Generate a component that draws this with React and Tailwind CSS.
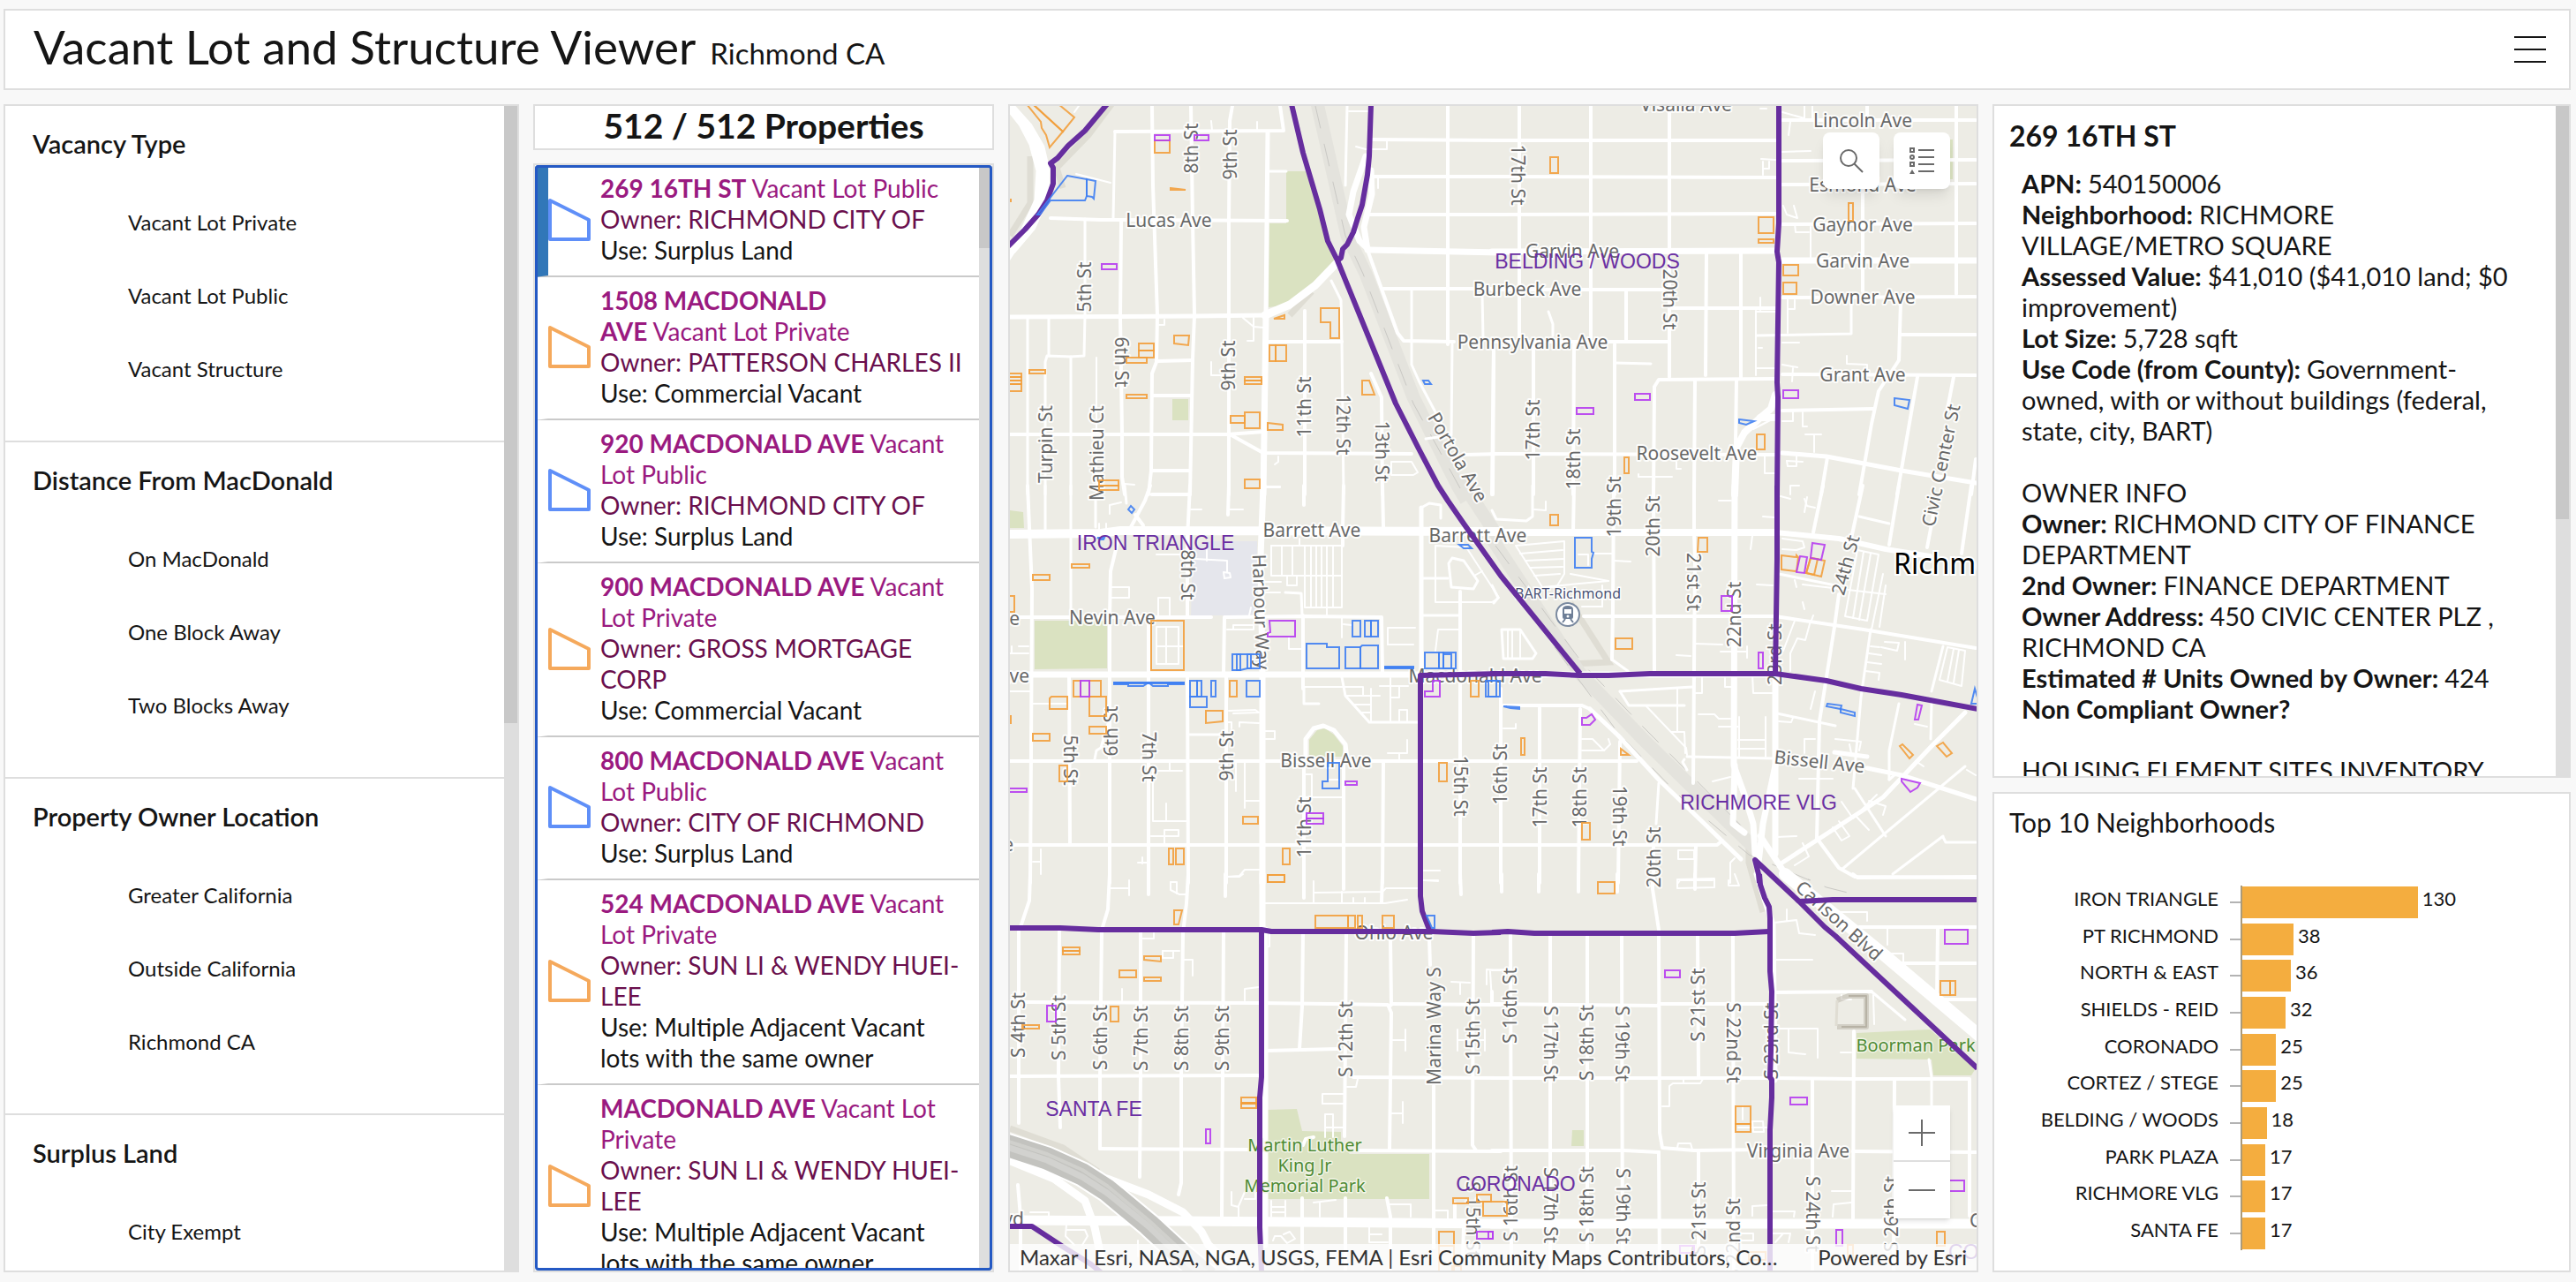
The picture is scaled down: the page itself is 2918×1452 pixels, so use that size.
import React from 'react';

const filters = [
  { title: 'Vacancy Type', options: ['Vacant Lot Private', 'Vacant Lot Public', 'Vacant Structure'] },
  { title: 'Distance From MacDonald', options: ['On MacDonald', 'One Block Away', 'Two Blocks Away'] },
  { title: 'Property Owner Location', options: ['Greater California', 'Outside California', 'Richmond CA'] },
  { title: 'Surplus Land', options: ['City Exempt'] },
];

const BLUE = '#5f8ff8';
const ORANGE = '#f5a95c';

const properties = [
  { name: '269 16TH ST', type: 'Vacant Lot Public', owner: 'RICHMOND CITY OF', use: 'Surplus Land', color: BLUE, selected: true },
  { name: '1508 MACDONALD\nAVE', type: 'Vacant Lot Private', owner: 'PATTERSON CHARLES II', use: 'Commercial Vacant', color: ORANGE },
  { name: '920 MACDONALD AVE', type: 'Vacant\nLot Public', owner: 'RICHMOND CITY OF', use: 'Surplus Land', color: BLUE },
  { name: '900 MACDONALD AVE', type: 'Vacant\nLot Private', owner: 'GROSS MORTGAGE\nCORP', use: 'Commercial Vacant', color: ORANGE },
  { name: '800 MACDONALD AVE', type: 'Vacant\nLot Public', owner: 'CITY OF RICHMOND', use: 'Surplus Land', color: BLUE },
  { name: '524 MACDONALD AVE', type: 'Vacant\nLot Private', owner: 'SUN LI & WENDY HUEI-\nLEE', use: 'Multiple Adjacent Vacant\nlots with the same owner', color: ORANGE },
  { name: 'MACDONALD AVE', type: 'Vacant Lot\nPrivate', owner: 'SUN LI & WENDY HUEI-\nLEE', use: 'Multiple Adjacent Vacant\nlots with the same owner', color: ORANGE },
];

const details = [
  ['APN:', '540150006'],
  ['Neighborhood:', 'RICHMORE\nVILLAGE/METRO SQUARE'],
  ['Assessed Value:', '$41,010 ($41,010 land; $0\nimprovement)'],
  ['Lot Size:', '5,728 sqft'],
  ['Use Code (from County):', 'Government-\nowned, with or without buildings (federal,\nstate, city, BART)'],
  null,
  ['', 'OWNER INFO'],
  ['Owner:', 'RICHMOND CITY OF FINANCE\nDEPARTMENT'],
  ['2nd Owner:', 'FINANCE DEPARTMENT'],
  ['Owner Address:', '450 CIVIC CENTER PLZ ,\nRICHMOND CA'],
  ['Estimated # Units Owned by Owner:', '424'],
  ['Non Compliant Owner?', ''],
  null,
  ['', 'HOUSING ELEMENT SITES INVENTORY'],
];

const neighborhoods = [
  ['IRON TRIANGLE', 130], ['PT RICHMOND', 38], ['NORTH & EAST', 36], ['SHIELDS - REID', 32], ['CORONADO', 25],
  ['CORTEZ / STEGE', 25], ['BELDING / WOODS', 18], ['PARK PLAZA', 17], ['RICHMORE VLG', 17], ['SANTA FE', 17],
];

/* ---------- map data: six survey sheets, each with its own origin ---------- */
const SX = 2.8;
const SY = 3;
const sheets = {
  A: {
    o: [1140, 110],
    parks: ['888,252 950,252 1050,560 980,640 900,705 832,715 835,430 888,430', '525,1027 577,1027 577,1097 525,1097'],
    roads: {
      2: ['285,885 285,1350', '222,260 330,290', '750,750 785,780 815,782', '785,750 783,828 765,828', '650,900 650,945 690,945', '502,755 502,775 485,775', '375,1315 405,1317', '862,1220 862,1238 850,1248', '1220,1238 1285,1240 1305,1275 1290,1285 1222,1285 1220,1238', '650,80 652,115', '796,85 796,115', '1110,168 1140,177 1208,177 1208,150', '1180,270 1180,310', '215,50 230,30', '1085,48 1150,48', '822,1322 868,1322'],
      3: ['345,118 338,410', '249,415 248,740 246,878 205,882 204,1350', '205,882 130,880 122,900 122,1350', '66,750 66,1350', '134,750 134,880', '835,252 888,252', '1030,625 1060,690 1065,830 1070,1350', '1080,30 1075,300', '1510,670 1512,820', '1415,840 1412,1150 1330,1160', '1286,655 1284,910 1310,970 1380,1110'],
      4: ['462,30 465,300 480,740 475,900 462,940 460,1270 450,1350', '586,30 590,420 595,740 590,890 583,1350', '718,30 708,80 706,420 706,1350', '365,420 362,750 368,1140 368,1290 375,1350', '345,118 880,115 868,30', '140,410 300,416 890,420', '480,897 590,893', '462,1014 585,1014', '11,1147 700,1145 815,1137', '715,1150 815,1210 1285,1212', '462,1270 583,1270', '462,1350 583,1350', '835,832 1065,830', '945,725 945,1350', '1155,940 1190,1020 1192,1350', '1155,145 1568,147', '1150,270 1568,270', '1150,400 1568,399', '1400,30 1400,840', '1145,520 1240,800 1260,828 1420,832', '1195,650 1568,652', '1545,850 1540,1350', '1450,1215 1568,1212'],
      5: ['11,747 600,744 820,742', '828,120 822,740'],
      7: ['822,740 815,1350', '1150,520 1568,528', '1140,200 1100,320 1085,400 1120,490 1150,520', '1155,250 1160,330 1135,440 1145,520'],
      9: ['820,742 900,705 980,640 1050,560', '0,20 50,90 85,160 105,250 100,350 60,450 0,550', '20,40 70,100 110,170 125,250 122,340 80,440 20,520'],
    },
    o_: [[471, 148, 519, 189], [382, 885, 446, 904], [420, 836, 468, 860], [420, 860, 468, 885], [382, 1010, 446, 1024], [74, 926, 122, 940], [5, 938, 48, 950], [5, 950, 48, 962], [5, 962, 48, 975], [5, 975, 48, 1000], '533,811 580,811 578,844 533,838', [757, 950, 810, 962], [757, 962, 810, 975], [712, 1082, 757, 1108], [757, 1070, 804, 1126], '830,1106 877,1112 877,1132 830,1132', [835, 842, 853, 898], [853, 842, 887, 898], '848,753 882,740 882,753', '998,716 1055,716 1055,819 1027,819 1027,766 998,766', '1127,962 1150,962 1167,1012 1127,1012', [757, 1298, 804, 1330], [293, 1303, 356, 1320], [293, 1320, 356, 1336], '522,308 569,315 522,315', '65,25 108,85 112,105 125,130 137,172 180,117 85,25', '180,117 215,70 165,25 85,25', [5, 348, 15, 354]],
    p_: [[471, 128, 519, 148], [595, 128, 642, 148], [303, 566, 351, 585]],
    b_: ['192,266 254,278 254,335 248,351 140,351 107,400 97,400', '254,278 284,285 276,346 272,338 254,335', '1322,962 1338,962 1347,976 1328,976'],
  },
  B: {
    o: [1690, 110],
    parks: ['1440,145 1461,145 1461,280 1440,280'],
    roads: {
      2: ['838,725 838,945', '838,728 900,728', '840,922 900,922', '990,30 990,72 920,50', '1015,30 1015,78', '920,185 1010,183', '1010,440 1010,545', '920,1100 955,1100 955,1070', '985,1070 985,1120 1000,1120', '995,1147 1045,1147', '1022,1150 1022,1205', '937,680 937,800', '960,690 960,720 940,720', '1125,880 1125,905 1190,910 1190,935', '465,1280 465,1290 570,1290', '865,1215 865,1278 900,1278', '855,210 900,212', '860,220 860,265', '880,220 880,242 862,242', '852,680 852,722', '945,85 942,130', '925,370 935,400 970,410 958,368', '960,430 962,458 1005,458', '920,835 975,835', '920,910 968,918', '955,920 953,965', '945,1350 945,1320 975,1320', '935,1235 985,1240', '965,1215 965,1255 938,1255 936,1235', '585,1240 585,1262 600,1262', '850,40 870,40', '845,852 858,852', '830,1128 900,1090'],
      3: ['180,730 193,770 193,810', '390,903 505,907', '840,810 1140,803 1140,700'],
      4: ['86,30 88,820', '313,30 313,820', '562,30 562,950', '0,147 900,147', '0,270 900,273', '0,399 900,397', '0,655 545,655', '570,717 900,717', '680,530 677,945', '790,530 790,950', '425,660 425,830', '0,832 560,832', '5,850 2,1350', '131,850 131,1350', '260,840 258,1350', '390,840 390,1350', '900,957 530,960 515,985 512,1350', '645,960 642,1350', '775,960 772,1180', '0,1212 900,1215', '920,78 1535,78', '920,215 1535,212', '920,297 1535,295', '920,432 1535,430', '920,680 1535,678', '920,942 1535,944', '920,1065 1210,1058', '1190,30 1190,80', '1175,295 1177,660', '1472,30 1472,670', '1295,700 1292,895 1225,1000 1205,1110 1165,1350', '1300,808 1535,806', '1350,950 1285,1350', '1465,950 1445,1060', '1065,1225 1045,1350', '1535,1230 1520,1350'],
      5: ['920,1210 1060,1220 1300,1270 1535,1310'],
      7: ['0,525 900,523', '920,555 1535,555'],
      8: ['900,1010 885,1060 850,1090 800,1140 775,1190 770,1350', '850,1090 900,1090'],
    },
    o_: [[185, 205, 211, 257], [846, 409, 894, 461], [846, 482, 894, 496], [924, 571, 972, 605], [924, 631, 967, 670], [1131, 361, 1146, 419], [840, 1147, 866, 1198], [421, 1225, 435, 1277]],
    p_: [[454, 1009, 502, 1030], [269, 1057, 323, 1078], [924, 997, 972, 1024]],
    b_: ['1278,1022 1325,1028 1320,1060 1278,1048', '784,1095 832,1101 805,1114 784,1108'],
  },
  C: {
    o: [1140, 550],
    parks: ['90,460 320,460 320,622 90,625', '11,85 52,90 56,145 11,145', '960,920 960,865 985,832 1010,825 1040,845 1068,885 1068,920'],
    roads: {
      2: ['840,205 1065,205 1065,413 945,413 945,205', '840,205 840,305 1065,305', '873,205 873,305', '890,305 890,340 920,340 920,305', '908,205 908,305', '965,205 965,413', '983,205 983,413', '1000,205 1000,413', '1017,205 1017,440', '1035,205 1035,413', '930,180 930,205', '820,327 870,327', '820,362 868,362', '475,480 545,480 545,605 475,605 475,480', '508,480 508,605', '475,545 560,545', '330,345 388,345 388,380 330,380', '482,447 482,380 518,380 518,447', '475,235 560,235', '600,250 700,255 700,295', '635,220 635,255', '690,295 708,298 710,312 692,314 690,295', '1360,205 1360,395 1540,395 1562,380 1460,210 1360,205', '1485,305 1510,290', '1360,560 1370,490 1440,490', '1210,540 1210,483 1295,483', '1210,540 1290,540', '943,685 1130,685 1130,712', '1075,715 1185,715', '1100,745 1155,745', '1125,770 1155,770', '1155,690 1155,800', '1218,655 1218,805', '1185,680 1275,680', '1245,805 1245,762 1270,762 1270,800', '1218,720 1245,720 1245,680', '85,740 190,740', '11,700 80,700', '705,765 790,762 800,770 720,775', '740,820 740,805 800,808', '700,805 715,805 715,825', '465,960 465,1140 570,1140', '460,1190 545,1190 545,1170 500,1170 500,1215', '508,1140 508,1080', '480,968 558,968', '518,940 518,968', '755,940 755,1095', '755,1070 805,1072', '727,940 727,1038', '700,1330 740,1325 755,1305 805,1305', '950,980 970,980 970,1058', '950,1058 1065,1058', '85,1278 108,1278', '108,1235 108,1320', '418,1280 445,1280', '430,1262 430,1285', '820,835 850,835 850,860 820,860', '1210,910 1270,908 1270,865', '1245,910 1245,930', '700,490 785,490 785,475 720,475 720,490', '770,440 775,415', '11,570 70,570', '18,545 18,570', '38,545 70,545', '1065,450 1065,515', '895,515 895,555 935,555', '1325,1308 1375,1308', '1325,1340 1370,1342', '328,95 328,65 365,58', '293,128 293,150', '316,128 316,150', '585,80 618,80', '705,80 750,80', '1095,475 1070,470', '1025,1000 1055,1000', '820,5 868,5', '1440,490 1440,360'],
      3: ['122,0 122,150', '204,0 205,450', '283,50 283,140', '375,0 380,60', '460,30 580,30', '943,685 943,740 990,740', '885,362 935,365 938,440', '1065,650 1075,715 1150,805 1310,805', '1315,75 1340,60 1378,65 1378,110', '580,845 690,845', '280,930 285,900 300,890 328,790', '1320,315 1400,315', '1415,245 1450,255 1495,325 1480,350 1410,345 1402,265 1415,245', '1320,442 1440,440'],
      4: ['66,0 80,350 78,900 76,1350', '455,0 440,50 395,140', '410,100 435,135', '355,180 330,290 328,450 328,1350', '582,0 575,180', '573,180 575,440', '575,640 576,1350', '706,0 702,100', '943,0 943,65', '1070,0 1068,150', '1068,180 1068,205', '1192,0 1195,140', '11,447 650,447', '690,640 692,447 940,445 1190,447 1192,640', '11,935 1568,935', '11,1222 1568,1220', '200,640 202,1222', '452,450 452,1350', '697,640 698,1350', '940,440 942,690', '943,935 943,1350', '1070,935 1070,1350', '1195,935 1192,1350', '1440,360 1440,1350'],
      5: ['1315,75 1315,640', '948,930 950,860 975,825 1005,815 1040,830 1075,880 1080,930'],
      7: ['815,0 805,240 812,640 812,1350', '11,643 1568,643'],
      10: ['11,165 300,162 360,154 1568,156'],
    },
    o_: [[460, 458, 564, 628], [208, 266, 262, 280], [85, 302, 138, 322], [5, 374, 26, 430], [214, 662, 236, 718], [262, 662, 300, 718], '136,722 142,716 193,716 193,760 136,760', [264, 716, 317, 783], [264, 818, 317, 843], [85, 842, 138, 867], [169, 950, 194, 1005], [707, 662, 732, 718], '634,764 687,764 687,800 634,806', [751, 1124, 799, 1150], [516, 1232, 530, 1288], '538,1232 564,1232 564,1288 538,1288', [875, 1232, 900, 1288], [830, 1322, 883, 1348], [1373, 943, 1397, 1005], [1474, 662, 1499, 718], [5, 783, 15, 806]],
    p_: [[236, 662, 262, 718], '835,458 916,458 916,514 830,514 830,502 836,498', [5, 1028, 65, 1042], [1076, 1004, 1112, 1018], [953, 1112, 1006, 1132], [953, 1132, 1006, 1150], '1352,662 1376,662 1376,718 1328,718 1328,700 1352,700'],
    b_: [[1098, 458, 1124, 514], [1137, 458, 1155, 514], [1155, 458, 1180, 514], '953,537 1017,537 1017,548 1055,548 1055,622 953,622', [1076, 548, 1122, 622], '1122,548 1128,543 1180,543 1180,622 1122,622', [1200, 614, 1292, 617], [1200, 617, 1292, 622], '718,572 804,572 804,622 765,622 742,628 718,628', [730, 572, 742, 626], [765, 572, 775, 622], [583, 662, 606, 717], [606, 662, 620, 717], [583, 717, 636, 753], [650, 662, 663, 717], [762, 662, 804, 717], '342,668 564,668 564,675 512,675 512,681 465,681 450,668 435,681 387,681 387,675 342,675', [342, 668, 564, 672], '1020,943 1055,943 1055,1029 1003,1029 1003,1004 1020,1004', [1328, 566, 1373, 622], [1373, 566, 1385, 622], [1385, 566, 1425, 622], [1387, 572, 1410, 622], [1530, 662, 1566, 717], '386,80 396,68 407,82 398,94', '1435,200 1465,200 1475,213 1450,213', '288,176 312,176 308,184 300,182'],
  },
  D: {
    o: [1690, 550],
    parks: [],
    roads: {
      2: ['75,205 230,190 230,300 205,345 160,345 75,205', '90,230 225,220', '105,255 228,248', '120,280 225,275', '135,305 215,300', '383,232 320,232', '275,235 305,235 305,270', '50,490 50,588', '65,490 65,588', '90,490 90,588', '160,345 370,325', '250,300 370,325', '350,410 350,340', '285,410 350,410', '385,255 440,258', '170,55 170,85 135,80', '588,690 588,835', '490,750 615,890 620,915', '568,838 610,838 612,910', '655,778 705,778 720,793 755,793', '780,865 865,865', '780,893 865,893', '867,785 867,920', '785,785 785,920', '645,538 730,540', '725,563 810,563', '810,545 810,585', '825,170 820,215', '860,105 895,108', '720,50 760,50', '1160,220 1225,235 1190,460 1120,445 1160,220', '1180,225 1145,450', '1200,230 1165,455', '1240,300 1205,490', '1250,340 1230,480', '1420,660 1445,550 1500,560 1490,680 1420,660', '1465,555 1445,665', '1480,558 1465,670', '1025,700 1010,760', '960,460 925,560', '1010,460 995,525 970,520 945,570 945,630', '35,825 75,825 75,810', '285,900 355,900 375,880 370,860', '285,860 320,862 355,900', '720,820 785,820', '990,45 1000,70 1025,75', '990,90 1000,40', '915,35 945,45', '920,180 985,190 990,210 965,220 920,215', '910,800 950,805 955,790', '1090,860 1170,870 1165,900', '990,910 990,860 1025,860', '975,995 1080,995', '1140,910 1135,880', '1080,1160 1110,1205 1135,1190 1100,1140', '1110,1075 1145,1130 1220,1050', '1150,1120 1195,1170', '1195,1070 1250,1090 1240,1120', '960,1290 1005,1260 985,1215', '905,1195 965,1190', '755,1350 755,1280 770,1265', '590,1240 640,1240 640,1270 590,1270 590,1240', '590,1350 595,1340 700,1340', '1505,965 1535,985', '1310,530 1310,590', '1245,530 1290,535 1285,560 1235,550', '1200,545 1230,550', '1195,570 1235,575', '1190,600 1235,605', '1185,630 1230,635 1225,660', '1345,935 1370,955', '1340,810 1380,820', '1020,440 1010,465', '700,1005 755,990', '960,320 965,345', '985,395 990,420', '740,655 740,685 760,685', '665,640 665,705 645,705', '825,640 828,705 895,705', '840,335 890,340', '585,575 630,578', '985,335 1250,370'],
      3: ['0,85 15,115 110,120 128,105 130,0', '30,490 90,490 140,570 130,588 35,588 30,490', '380,590 430,630', '405,700 435,748 610,748', '405,700 635,685', '620,920 900,928', '610,930 605,940 620,965', '910,300 1090,340', '1430,545 1395,700', '1395,740 1392,860', '905,775 1090,815', '1165,105 1260,130', '1110,1305 1500,955', '1270,1320 1430,1190', '1150,1030 1250,1190', '1430,1195 1440,1212 1535,1212', '1290,740 1260,900 1260,1000', '530,1010 520,1150', '1200,490 1170,720 1145,1030', '1280,980 1260,1000', '0,340 20,380 5,400'],
      4: ['260,0 258,158', '385,0 383,420 380,590', '512,0 514,638', '640,0 640,160 645,250 638,1010', '290,443 895,443', '900,443 1180,490 1535,552', '28,690 28,1350', '35,748 285,748 310,760', '152,755 150,1350', '280,760 275,1350', '405,870 400,1350', '0,935 460,935', '0,1220 715,1220 730,1205', '648,1225 645,1350', '1050,0 1020,160', '1175,0 1140,180', '1290,0 1260,200', '1400,100 1380,210', '1520,0 1490,230', '1100,370 1085,480 1040,800 1030,1200', '1035,1205 1100,1300 1150,1330 1535,1332', '512,1220 512,1350'],
      5: ['920,1280 1240,1060 1400,880 1500,770', '1190,960 1300,985 1535,1065', '310,760 400,850 530,1000 790,1270', '1085,905 1190,920'],
      7: ['770,0 768,950 800,1050 830,1150 835,1250', '770,950 765,1150 800,1180', '900,640 900,950 860,1150 845,1280', '900,950 900,1250', '850,1190 950,1350', '0,641 900,641'],
      8: ['0,158 900,158'],
      6: ['900,158 1100,180 1250,215 1390,240'],
    },
    o_: [[185, 98, 211, 136], '656,176 682,176 682,226 651,226', '918,236 965,242 967,238 972,242 965,292 918,285', '1010,246 1055,255 1045,309 998,298', '1010,246 1033,250 1022,303 998,298', [393, 518, 446, 556], [91, 859, 104, 916], '410,895 434,916 410,916', [286, 1147, 312, 1204], '1293,885 1302,878 1336,915 1325,928', '1412,885 1430,872 1460,908 1442,922'],
    p_: ['1017,195 1055,200 1045,253 1010,246', '977,241 1000,243 990,298 965,293', [729, 374, 761, 425], [846, 566, 859, 622], '286,790 300,790 315,777 328,795 312,814 286,814', '1350,745 1363,747 1352,796 1340,796', '1300,997 1358,1010 1350,1025 1328,1042 1300,1004'],
    b_: ['264,176 317,176 317,225 322,228 317,250 317,280 264,280', '1065,740 1110,746 1106,760 1060,750', '1106,760 1152,770 1152,783 1106,770', '35,751 88,753 88,760 60,755', [-20, 662, 15, 717], '1532,690 1520,740 1545,742'],
  },
  E: {
    o: [1140, 990],
    parks: ['828,800 922,798 937,872 1060,877 1060,920 1090,950 1342,952 1342,1103 828,1105'],
    roads: {
      2: ['975,62 1192,60 1205,48 1310,48', '975,25 975,98', '820,100 1200,98 1270,88', '1065,60 1065,98', '1100,80 1100,98', '1138,82 1138,98', '1002,780 1002,747 1070,747', '1002,780 1070,780', '1010,895 1012,815 1037,815 1037,895', '1222,563 1265,563', '1265,528 1265,600', '1222,812 1258,812', '1258,775 1258,845', '1432,528 1432,600', '1432,565 1518,565', '1518,528 1518,600', '330,48 390,48', '390,20 390,72', '522,28 540,28 540,65', '522,28 522,55 550,68 572,68', '425,220 468,220 468,200', '495,262 550,262', '495,262 495,285 530,285 530,262', '560,290 592,290 592,345', '368,390 368,430', '755,430 755,390 800,385', '835,205 835,245 820,245', '1410,367 1470,370', '1438,370 1438,408', '1325,22 1370,25', '1522,375 1522,325 1568,328', '1535,330 1540,435', '700,10 740,10 750,0', '1080,722 1110,722 1115,695', '715,1080 715,1125 735,1130', '755,1080 735,1128 735,1165', '790,1070 790,1105 755,1105', '840,1130 885,1130', '840,1150 885,1150', '885,1110 885,1165', '840,1110 840,1165', '975,1115 1045,1107', '995,1115 995,1165', '1215,1122 1282,1122 1282,1165', '1360,1142 1400,1142 1400,1170', '75,1150 135,1150 135,1165', '190,1190 188,1230 215,1260', '190,1210 250,1210 258,1230 240,1260', '845,1245 850,1230 870,1230 890,1255 915,1240 900,1215 880,1225', '1150,1200 1150,1250 1210,1250', '1150,1225 1190,1225', '418,1245 418,1300', '1012,860 1070,860'],
      4: ['76,0 72,90 45,180', '328,0 322,120 305,180', '577,0 572,100 560,200 553,690 553,1050 545,1090', '452,0 452,70', '695,0 695,75', '943,0 943,80', '1070,0 1070,50', '1192,0 1190,95', '1440,0 1442,70', '38,195 38,845', '167,195 165,690 170,860', '303,195 296,690 296,932', '425,195 425,690 422,1030', '688,195 685,690 683,1165', '940,200 938,450 930,595', '1078,200 1073,890', '1218,220 1222,445 1212,450 1220,470 1215,940', '1340,220 1345,310', '1355,720 1355,1270', '1480,200 1478,920 1490,940', '60,435 800,437 1210,445', '1220,442 1568,445', '11,687 800,685', '1100,690 1568,692', '296,932 780,936', '1090,940 1568,942', '822,600 1050,595', '938,1100 938,1350', '1075,1100 1075,1350', '1208,1100 1217,1165 1217,1350', '37,1055 45,1165', '45,1190 45,1350', '1423,1120 1423,1170', '1450,1200 1448,1300', '940,920 950,900 975,895'],
      7: ['812,0 812,180', '820,190 820,1260'],
      9: ['0,970 150,1035 250,1110 280,1200 300,1300', '320,1035 450,1090 560,1150 620,1215 640,1260 720,1340'],
      11: ['11,1175 560,1180 1568,1187'],
    },
    o_: [[830, 2, 883, 28], '533,122 556,122 545,172 533,172', [981, 140, 1083, 184], [1083, 140, 1106, 184], [1115, 140, 1129, 184], [1194, 140, 1230, 184], [180, 248, 233, 260], [180, 260, 233, 273], [359, 326, 412, 352], '438,278 491,278 491,297 438,292', [438, 350, 491, 364], [331, 451, 356, 502], [51, 512, 104, 526], [746, 758, 793, 776], [746, 776, 793, 780], [746, 780, 793, 796], [1418, 1100, 1465, 1120], [1491, 1088, 1538, 1112], [1373, 1214, 1420, 1262], [1373, 1262, 1420, 1350], [1415, 1332, 1443, 1350]],
    p_: [[130, 446, 156, 502], [633, 866, 648, 916], [1491, 1214, 1544, 1240]],
    b_: ['1332,140 1358,140 1358,184 1350,184'],
  },
  F: {
    o: [1690, 990],
    parks: ['1157,540 1390,528 1535,660 1520,683 1400,683 1395,630 1157,628', '255,870 290,870 290,925 252,925'],
    roads: {
      2: ['588,18 705,15 705,45 588,48 588,18', '750,20 750,38 785,38 770,0', '895,165 965,155 975,200 1025,207', '935,120 935,160', '895,290 1015,292', '910,525 1033,525 1033,625', '940,525 940,605 995,612', '1090,130 1190,130 1190,160', '1253,185 1253,240', '1258,270 1305,270 1305,298', '540,790 562,790 562,720 575,710 660,710 668,695', '608,695 608,710', '588,930 590,915 630,915 635,935', '825,840 860,840 862,875 830,875 825,840', '795,835 795,790', '780,860 870,860', '1080,1165 1083,1122 1140,1115', '1078,1077 1140,1077', '825,1160 825,1127 875,1125', '885,1147 960,1147 958,1165', '780,1220 830,1220 830,1245 780,1245', '890,1220 945,1220 940,1250', '900,1250 925,1220', '0,327 45,325', '1110,410 1110,425 1140,425', '1105,605 1140,605', '1210,410 1212,510'],
      3: ['1205,400 1310,495', '1385,630 1395,690 1395,800'],
      4: ['30,0 30,60', '148,0 148,60', '273,0 273,60', '398,0 398,60', '645,0 645,50', '510,0 510,50 528,190', '59,205 62,1350', '185,210 186,1350', '302,210 302,1350', '411,210 415,1350', '530,210 532,880 540,930 640,940 870,935', '530,945 532,1350', '652,210 655,690', '765,210 767,1350', '655,945 655,1350', '0,442 530,448', '530,440 870,440', '0,692 870,692 1145,697 1515,695 1515,1160', '0,940 420,938 530,945', '895,403 1205,400', '1147,535 1145,1170', '1017,700 1017,1350', '1277,700 1275,1350', '1145,942 1535,944', '1165,180 1535,180', '1413,185 1410,420', '1280,303 1535,303', '1410,425 1535,425', '1145,0 1160,12 1535,10', '0,400 0,440'],
      7: ['840,0 890,170 895,700'],
      11: ['0,1187 1535,1187'],
      14: ['930,0 1250,280 1560,560'],
    },
    o_: [[336, 26, 390, 65], [774, 788, 821, 848], [774, 848, 821, 875], [1423, 362, 1453, 412], [1453, 362, 1471, 412], [1412, 1214, 1437, 1262], [1128, 1260, 1144, 1310], [815, 1285, 868, 1310], [-28, 1112, 48, 1162]],
    p_: [[549, 326, 597, 352], [946, 758, 1000, 784], [1435, 188, 1510, 238], [1440, 1040, 1499, 1078], [1093, 1208, 1112, 1262], [595, 1262, 640, 1288], [-10, 1214, 4, 1240]],
    b_: [],
  },
};

const boundaries = [
  ['A', '318,25 250,115 195,165 162,208 140,224 148,240 148,295 130,350 100,400 60,450 5,508'],
  ['A', '905,25 940,190 995,380 1020,490 1050,555 1235,1040 1310,1200 1370,1320 1400,1370 1450,1450 1568,1625 1820,1958'],
  ['A', '1157,25 1150,200 1145,265 1128,365 1115,410 1100,460 1080,500 1068,515 1060,545 1050,555'],
  ['B', '909,25 909,430 903,525 909,560 903,970 908,1020 905,1350'],
  ['C', '1568,638 1312,645 1312,1350'],
  ['D', '905,0 905,250 900,640'],
  ['D', '-5,638 170,638 280,645 370,645 500,638 900,638 1060,662 1170,690 1300,712 1420,735 1540,760'],
  ['D', '848,1350 846,1320 835,1272 975,1412 1055,1500 1090,1530 1540,1980'],
  ['E', '1312,0 1312,75 1320,125 1340,190'],
  ['E', '5,183 170,183 290,190 810,188 840,195 1350,195 1480,200 1568,197'],
  ['E', '809,190 809,690 803,760 803,1200 808,1350'],
  ['E', '5,1197 80,1197 180,1265 270,1325 300,1352'],
  ['F', '0,197 50,194 135,201 770,200 880,194'],
  ['F', '848,0 850,35 865,80 878,110 882,150 882,330 888,400 885,600 882,690 888,700 888,760 882,870 882,1352'],
  ['F', '975,92 1080,87 1540,87'],
];

const streets = [
  ['A', 'Lucas Ave', 515, 420, 0], ['A', '8th St', 588, 175, -90], ['A', '9th St', 712, 195, -90], ['A', '5th St', 248, 645, -90],
  ['A', '6th St', 365, 900, 90], ['A', '9th St', 706, 912, -90], ['A', 'Turpin St', 126, 1180, -90], ['A', 'Mathieu Ct', 288, 1210, -90],
  ['A', '11th St', 945, 1052, -90], ['A', '12th St', 1067, 1112, 90], ['A', '13th St', 1190, 1203, 90], ['A', 'Portola Ave', 1431, 1224, 60],
  ['B', 'Visalia Ave', 616, 26, 0], ['B', 'Lincoln Ave', 1176, 82, 0], ['B', 'Esmond Ave', 1176, 300, 0], ['B', 'Gaynor Ave', 1176, 435, 0],
  ['B', 'Garvin Ave', 1176, 557, 0], ['B', 'Downer Ave', 1176, 680, 0], ['B', 'Grant Ave', 1176, 946, 0], ['B', 'Garvin Ave', 255, 525, 0],
  ['B', 'Burbeck Ave', 112, 655, 0], ['B', 'Pennsylvania Ave', 129, 835, 0], ['B', '17th St', 80, 265, 90], ['B', '20th St', 562, 688, 90],
  ['B', '17th St', 132, 1130, -90], ['B', '18th St', 260, 1230, -90], ['B', '19th St', 388, 1392, -90], ['B', 'Roosevelt Ave', 650, 1213, 0],
  ['B', 'Civic Center St', 1425, 1251, -78],
  ['C', 'Barrett Ave', 968, 152, 0], ['C', 'Barrett Ave', 1495, 171, 0], ['C', '8th St', 573, 302, 90], ['C', 'Harbour Way', 805, 430, 88],
  ['C', 'Nevin Ave', 337, 450, 0], ['C', 'Macdonald Ave', 1487, 648, 0], ['C', '6th St', 332, 835, -90], ['C', '5th St', 202, 932, 90],
  ['C', '7th St', 452, 920, 90], ['C', '9th St', 700, 917, -90], ['C', 'Bissell Ave', 1014, 937, 0], ['C', '11th St', 945, 1162, -90],
  ['C', '15th St', 1440, 1020, 90],
  ['D', '16th St', 28, 980, -90], ['D', '20th St', 512, 138, -90], ['D', '21st St', 637, 327, 90], ['D', '22nd St', 770, 437, -90],
  ['D', '23rd St', 900, 573, -90], ['D', '24th St', 1122, 270, -75], ['D', '17th St', 153, 1058, -90], ['D', '18th St', 280, 1058, -90],
  ['D', '19th St', 402, 1122, 90], ['D', '20th St', 515, 1262, -90], ['D', 'Bissell Ave', 1040, 940, 6],
  ['E', 'Ohio Ave', 1228, 200, 0], ['E', 'S 4th St', 40, 512, -90], ['E', 'S 5th St', 168, 522, -90], ['E', 'S 6th St', 300, 555, -90],
  ['E', 'S 7th St', 427, 558, -90], ['E', 'S 8th St', 556, 558, -90], ['E', 'S 9th St', 687, 558, -90], ['E', 'S 12th St', 1078, 562, -90],
  ['E', 'Marina Way S', 1357, 515, -90], ['E', 'S 15th St', 1480, 553, -90], ['E', 'S 15th St', 1478, 1172, 90],
  ['F', 'S 16th St', 58, 447, -90], ['F', 'S 17th St', 185, 575, 90], ['F', 'S 18th St', 303, 572, -90], ['F', 'S 19th St', 412, 575, 90],
  ['F', 'S 21st St', 656, 443, -90], ['F', 'S 22nd St', 765, 572, 90], ['F', 'S 23rd St', 887, 567, -90], ['F', 'Virginia Ave', 972, 942, 0],
  ['F', 'Carlson Blvd', 1100, 160, 42], ['F', 'S 16th St', 62, 1120, -90], ['F', 'S 17th St', 185, 1125, 90], ['F', 'S 18th St', 303, 1122, -90],
  ['F', 'S 19th St', 413, 1127, 90], ['F', 'S 21st St', 657, 1170, -90], ['F', 'S 22nd St', 767, 1240, -90], ['F', 'S 24th St', 1017, 1155, 90],
  ['F', 'S 26th St', 1268, 1155, -90],
];

const districts = [
  ['B', 'BELDING / WOODS', 303, 559], ['C', 'IRON TRIANGLE', 473, 195], ['D', 'RICHMORE VLG', 846, 1077],
  ['E', 'SANTA FE', 277, 799], ['F', 'CORONADO', 76, 1052],
];

const at = (s, x, y) => [Math.round(sheets[s].o[0] + x / SX), Math.round(sheets[s].o[1] + y / SY)];
const pts = (s, str) =>
  str.split(' ').map((p) => { const [x, y] = p.split(',').map(Number); return at(s, x, y).join(','); }).join(' ');
const shape = (s, v) =>
  typeof v === 'string' ? pts(s, v) : pts(s, `${v[0]},${v[1]} ${v[2]},${v[1]} ${v[2]},${v[3]} ${v[0]},${v[3]}`);

const names = Object.keys(sheets);

function Label({ s, text, x, y, r }) {
  const [cx, cy] = at(s, x, y);
  return (
    <text x={cx} y={cy} dy="7" transform={`rotate(${r} ${cx} ${cy})`} textAnchor="middle">{text}</text>
  );
}

function CityMap() {
  return (
    <svg className="block h-full w-full" viewBox="1144 120 1095 1319" preserveAspectRatio="xMidYMid slice" role="img" aria-label="Map of Richmond">
      <rect x="1000" y="0" width="1400" height="1600" fill="#edece5" />
      <polygon points={pts('C', '590,215 630,190 795,188 795,440 700,442 585,442')} fill="#e5e6ec" />
      <g fill="#dae2c1">
        {names.map((n) => sheets[n].parks.map((p, i) => <polygon key={n + i} points={pts(n, p)} />))}
      </g>
      <g fill="none" stroke="#d6d3c8" strokeOpacity="0.6" strokeWidth="7">
        <polyline points={pts('A', '335,20 260,130 160,240 180,310')} />
        <polyline points={pts('A', '75,200 75,360 11,470')} />
        <polyline points={pts('A', '970,660 900,740')} />
        <polyline points={pts('D', '250,400 370,600 250,605')} />
        <polyline points={pts('D', '815,1200 815,1280 860,1450')} />
        <polyline points={pts('E', '11,865 180,930 290,1010')} />
      </g>
      <g fill="none" stroke="#e4e3dd" strokeWidth="15">
        <polyline points={pts('A', '985,20 1080,470 1140,600 1290,1020 1430,1320 1460,1370')} />
        <polyline points={pts('C', '1440,-20 1568,190')} />
        <polyline points={pts('D', '0,180 280,640 480,860 840,1240')} />
      </g>
      <g fill="none" stroke="#c9c8c4" strokeWidth="1" strokeDasharray="26 18">
        <polyline points={pts('A', '980,30 1075,470 1130,600 1290,1040 1440,1330')} />
        <polyline points={pts('D', '10,205 290,610 480,820 860,1230')} />
        <polyline points={pts('D', '200,550 400,840 600,1060 815,1255 1010,1340')} />
        <polyline points={pts('F', '940,-10 1060,45 1150,70')} />
      </g>
      <g fill="none" stroke="#ffffff" strokeLinecap="round" strokeLinejoin="round">
        {names.map((n) =>
          Object.entries(sheets[n].roads).map(([w, list]) =>
            list.map((p, i) => <polyline key={n + w + i} points={pts(n, p)} strokeWidth={w} />)
          )
        )}
      </g>
      <g fill="none" strokeLinejoin="round">
        <polyline points={pts('E', '0,920 130,965 240,1020 320,1075 450,1190 560,1300 640,1370')} stroke="#ffffff" strokeWidth="29" />
        <polyline points={pts('E', '0,920 130,965 240,1020 320,1075 450,1190 560,1300 640,1370')} stroke="#c3c3bf" strokeWidth="25" />
        <polyline points={pts('E', '0,928 130,973 240,1028 320,1083 450,1198 560,1308 640,1378')} stroke="#d2d2cf" strokeWidth="7" />
        <polyline points={pts('E', '0,905 130,950 240,1005 320,1060 450,1175 560,1285 640,1355')} stroke="#d0d0cc" strokeWidth="4" />
        <polyline points={pts('F', '1095,430 1130,415 1188,415 1188,518 1095,520')} stroke="#b7b2a5" strokeOpacity="0.5" strokeWidth="6" />
        <polyline points={pts('F', '1130,415 1188,415 1188,518 1110,520')} stroke="#b7b2a5" strokeWidth="2" />
        <polyline points={pts('F', '1095,430 1092,515')} stroke="#e0ddd3" strokeWidth="3" />
      </g>

      <g fontFamily="'Noto Sans', sans-serif" fontSize="21" fill="#686868" stroke="#ffffff" strokeOpacity="0.85" strokeWidth="4" strokeLinejoin="round" paintOrder="stroke">
        {streets.map(([s, t, x, y, r], i) => <Label key={i} s={s} text={t} x={x} y={y} r={r} />)}
        <text x="1155" y="708" textAnchor="end">Nevin Ave</text>
        <text x="1166" y="773" textAnchor="end">Macdonald Ave</text>
        <text x="1148" y="964" textAnchor="end">Chanslor Ave</text>
        <text x="1160" y="1388" textAnchor="end">Cutting Blvd</text>
        <text x="2231" y="1390">Cutting Blvd</text>
      </g>
      <g fontFamily="'Noto Sans', sans-serif" fontSize="20" fill="#4e8a34" stroke="#f1f4e6" strokeWidth="3" strokeLinejoin="round" paintOrder="stroke" textAnchor="middle">
        <text x="1478" y="1304">Martin Luther</text>
        <text x="1478" y="1327">King Jr</text>
        <text x="1478" y="1350">Memorial Park</text>
        <text x="2170" y="1191">Boorman Park</text>
      </g>
      <text x="2145" y="650" fontFamily="'Noto Sans', sans-serif" fontSize="32" fill="#000000" stroke="#ffffff" strokeWidth="4" paintOrder="stroke">Richmond</text>
      <text x="1776" y="678" textAnchor="middle" fontFamily="'Noto Sans', sans-serif" fontSize="16" fill="#4b5375" stroke="#ffffff" strokeWidth="3" paintOrder="stroke">BART-Richmond</text>
      <g>
        <circle cx="1776" cy="696" r="13" fill="#ffffff" stroke="#7b8aa0" strokeWidth="2" />
        <path d="M1770 690q0-4 6-4t6 4v9q0 2-2 2h-8q-2 0-2-2z" fill="#6f7f97" />
        <rect x="1772" y="690" width="8" height="5" fill="#ffffff" />
        <circle cx="1776" cy="698" r="1.5" fill="#ffffff" />
        <path d="M1773 701l-3 4M1779 701l3 4" stroke="#6f7f97" strokeWidth="2" fill="none" />
      </g>

      <g fill="none" stroke="#662d9e" strokeWidth="6" strokeLinejoin="round">
        {boundaries.map(([s, p], i) => <polyline key={i} points={pts(s, p)} />)}
      </g>
      <g fill="none" strokeWidth="2" strokeOpacity="0.9">
        {names.map((n) => (
          <g key={n}>
            <g stroke="#f2a03d">{sheets[n].o_.map((v, i) => <polygon key={i} points={shape(n, v)} />)}</g>
            <g stroke="#b63df0">{sheets[n].p_.map((v, i) => <polygon key={i} points={shape(n, v)} />)}</g>
            <g stroke="#3f80f2">{sheets[n].b_.map((v, i) => <polygon key={i} points={shape(n, v)} />)}</g>
          </g>
        ))}
      </g>
      <g fontFamily="'Liberation Sans', Arial, sans-serif" fontSize="23" fill="#6a2fa3" textAnchor="middle">
        {districts.map(([s, t, x, y]) => { const [cx, cy] = at(s, x, y); return <text key={t} x={cx} y={cy} dy="8">{t}</text>; })}
        <text x="2207" y="1426" textAnchor="start">CORTEZ / STEGE</text>
      </g>
    </svg>
  );
}

/* ---------- panels ---------- */
function ScrollTrack({ thumb }) {
  return (
    <div className="w-[15px] shrink-0 bg-[#dedede]">
      <div className="w-full bg-[#c8c8c8]" style={{ height: thumb }} />
    </div>
  );
}

function Filters() {
  return (
    <aside className="flex min-w-0 overflow-hidden border-2 border-[#dedede] bg-white">
      <div className="min-w-0 flex-1 overflow-hidden">
        {filters.map((f) => (
          <section key={f.title} className="border-b-2 border-[#dedede] pt-[23px] pb-10 last:border-b-0">
            <h2 className="mb-[27px] pl-[31px] text-[29px] leading-10 font-semibold">{f.title}</h2>
            {f.options.map((o) => (
              <button key={o} type="button" className="flex h-[83px] w-full items-center pl-[139px] text-[24px]">{o}</button>
            ))}
          </section>
        ))}
      </div>
      <ScrollTrack thumb="53%" />
    </aside>
  );
}

function PropertyList() {
  return (
    <div className="min-h-0 flex-1 border-2 border-[#dedede] bg-white">
      <div className="flex h-full overflow-hidden rounded-sm outline-3 -outline-offset-3 outline-[#2459c4]">
        <ul className="min-w-0 flex-1 overflow-hidden text-[28px] leading-[35px]">
          {properties.map((p) => (
            <li
              key={p.name}
              className={`flex items-center gap-[11px] border-b-2 border-b-[#cacaca] pt-[9px] pb-[11px] whitespace-pre ${p.selected ? 'border-l-[15px] border-l-[#3177b8]' : 'border-l-[15px] border-l-transparent'}`}
            >
              <svg className="h-12 w-12 shrink-0" viewBox="0 0 48 48" fill="none">
                <path d="M2 2 46 24V46H2Z" stroke={p.color} strokeWidth="4" strokeLinejoin="round" />
              </svg>
              <div>
                <p className="text-[#9a1a80]"><b className="font-bold">{p.name}</b> {p.type}</p>
                <p className="text-[#6a0f4d]">Owner: {p.owner}</p>
                <p>Use: {p.use}</p>
              </div>
            </li>
          ))}
        </ul>
        <ScrollTrack thumb="94px" />
      </div>
    </div>
  );
}

function MapPanel() {
  return (
    <section className="relative min-w-0 overflow-hidden border-2 border-[#dedede]">
      <CityMap />
      <div className="absolute top-[30px] right-[30px] flex gap-4">
        <button type="button" aria-label="Search" className="flex h-16 w-16 items-center justify-center rounded-lg bg-white shadow-lg">
          <svg className="h-8 w-8" viewBox="0 0 32 32" fill="none" stroke="#6a6a6a" strokeWidth="2">
            <circle cx="13" cy="13" r="9" />
            <path d="M19.500 19.500 29 29" />
          </svg>
        </button>
        <button type="button" aria-label="Legend" className="flex h-16 w-16 items-center justify-center rounded-lg bg-white shadow-lg">
          <svg className="h-8 w-8" viewBox="0 0 32 32" fill="none" stroke="#6a6a6a" strokeWidth="2">
            <rect x="3" y="2" width="4" height="4" />
            <circle cx="5" cy="12" r="2" />
            <rect x="3" y="18" width="4" height="4" />
            <path d="M5 26 8 31H2Z" fill="#6a6a6a" stroke="none" />
            <path d="M12 4H30M12 12H30M12 20H30M12 28H30" />
          </svg>
        </button>
      </div>
      <div className="absolute right-[30px] bottom-[59px] flex w-16 flex-col bg-white shadow-md">
        <button type="button" aria-label="Zoom in" className="flex h-16 items-center justify-center border-b-2 border-[#dedede]">
          <svg className="h-8 w-8" viewBox="0 0 32 32" stroke="#6a6a6a" strokeWidth="2"><path d="M1 16H31M16 1V31" /></svg>
        </button>
        <button type="button" aria-label="Zoom out" className="flex h-16 items-center justify-center">
          <svg className="h-8 w-8" viewBox="0 0 32 32" stroke="#6a6a6a" strokeWidth="2"><path d="M1 16H31" /></svg>
        </button>
      </div>
      <div className="absolute inset-x-0 bottom-0 flex h-[30px] items-center justify-between bg-white/80 px-[11px] text-[24px] text-[#323232]">
        <span className="whitespace-nowrap">Maxar | Esri, NASA, NGA, USGS, FEMA | Esri Community Maps Contributors, Co…</span>
        <span className="whitespace-nowrap">Powered by Esri</span>
      </div>
    </section>
  );
}

function Details() {
  return (
    <section className="flex min-h-0 overflow-hidden border-2 border-[#dedede] bg-white">
      <div className="min-w-0 flex-1 overflow-hidden pt-3">
        <h2 className="mb-[14px] pl-[17px] text-[32px] leading-[44px] font-bold">269 16TH ST</h2>
        <div className="pl-[31px] text-[29px] leading-[35px] whitespace-pre">
          {details.map((d, i) =>
            d ? <p key={i}>{d[0] && <b className="font-bold">{d[0]} </b>}{d[1]}</p> : <div key={i} className="h-[35px]" />
          )}
        </div>
      </div>
      <ScrollTrack thumb="468px" />
    </section>
  );
}

function Chart() {
  return (
    <section className="flex min-h-0 flex-col border-2 border-[#dedede] bg-white pb-[23px]">
      <h2 className="mt-3 mb-[52px] pl-[17px] text-[30px] leading-10">Top 10 Neighborhoods</h2>
      <div className="flex min-h-0 flex-1 text-[22px]">
        <div className="flex w-[254px] flex-col justify-between py-px text-right">
          {neighborhoods.map(([n]) => <div key={n} className="h-9 leading-7">{n}</div>)}
        </div>
        <div className="ml-[13px] flex w-3 flex-col justify-between py-px">
          {neighborhoods.map(([n]) => (
            <div key={n} className="flex h-9 items-center"><span className="h-[2px] w-full bg-[#b3b3b3]" /></div>
          ))}
        </div>
        <div className="mr-6 flex flex-1 flex-col justify-between border-l-2 border-[#ab9a78] py-px">
          {neighborhoods.map(([n, v]) => (
            <div key={n} className="flex h-9">
              <div className="h-full bg-[#f4ad3f]" style={{ width: `${v * 0.442}%` }} />
              <span className="ml-[5px] leading-7">{v}</span>
            </div>
          ))}
        </div>
      </div>
    </section>
  );
}

export default function App() {
  return (
    <div className="flex h-screen flex-col gap-4 overflow-hidden bg-[#f8f8f8] pt-[10px] pr-[6px] pb-[11px] pl-1 font-['Lato',sans-serif] text-[#151515]">
      <header className="flex h-[92px] shrink-0 items-center justify-between border-2 border-[#dedede] bg-white pr-[26px] pl-8">
        <h1 className="flex items-baseline gap-4 text-[53px] leading-[72px]">
          Vacant Lot and Structure Viewer
          <small className="text-[33px]">Richmond CA</small>
        </h1>
        <button type="button" aria-label="Menu" className="flex w-9 flex-col gap-3">
          <span className="h-[2px] bg-[#151515]" />
          <span className="h-[2px] bg-[#151515]" />
          <span className="h-[2px] bg-[#151515]" />
        </button>
      </header>
      <main className="grid min-h-0 flex-1 grid-cols-[584fr_522fr_1099fr_655fr] grid-rows-[minmax(0,1fr)] gap-4">
        <Filters />
        <div className="flex min-h-0 min-w-0 flex-col gap-[15px]">
          <div className="flex h-[52px] items-center justify-center border-2 border-[#dedede] bg-white pb-[3px] text-[39px] leading-none font-bold">
            512 / 512 Properties
          </div>
          <PropertyList />
        </div>
        <MapPanel />
        <div className="grid min-h-0 min-w-0 grid-rows-[763fr_544fr] gap-4">
          <Details />
          <Chart />
        </div>
      </main>
    </div>
  );
}
